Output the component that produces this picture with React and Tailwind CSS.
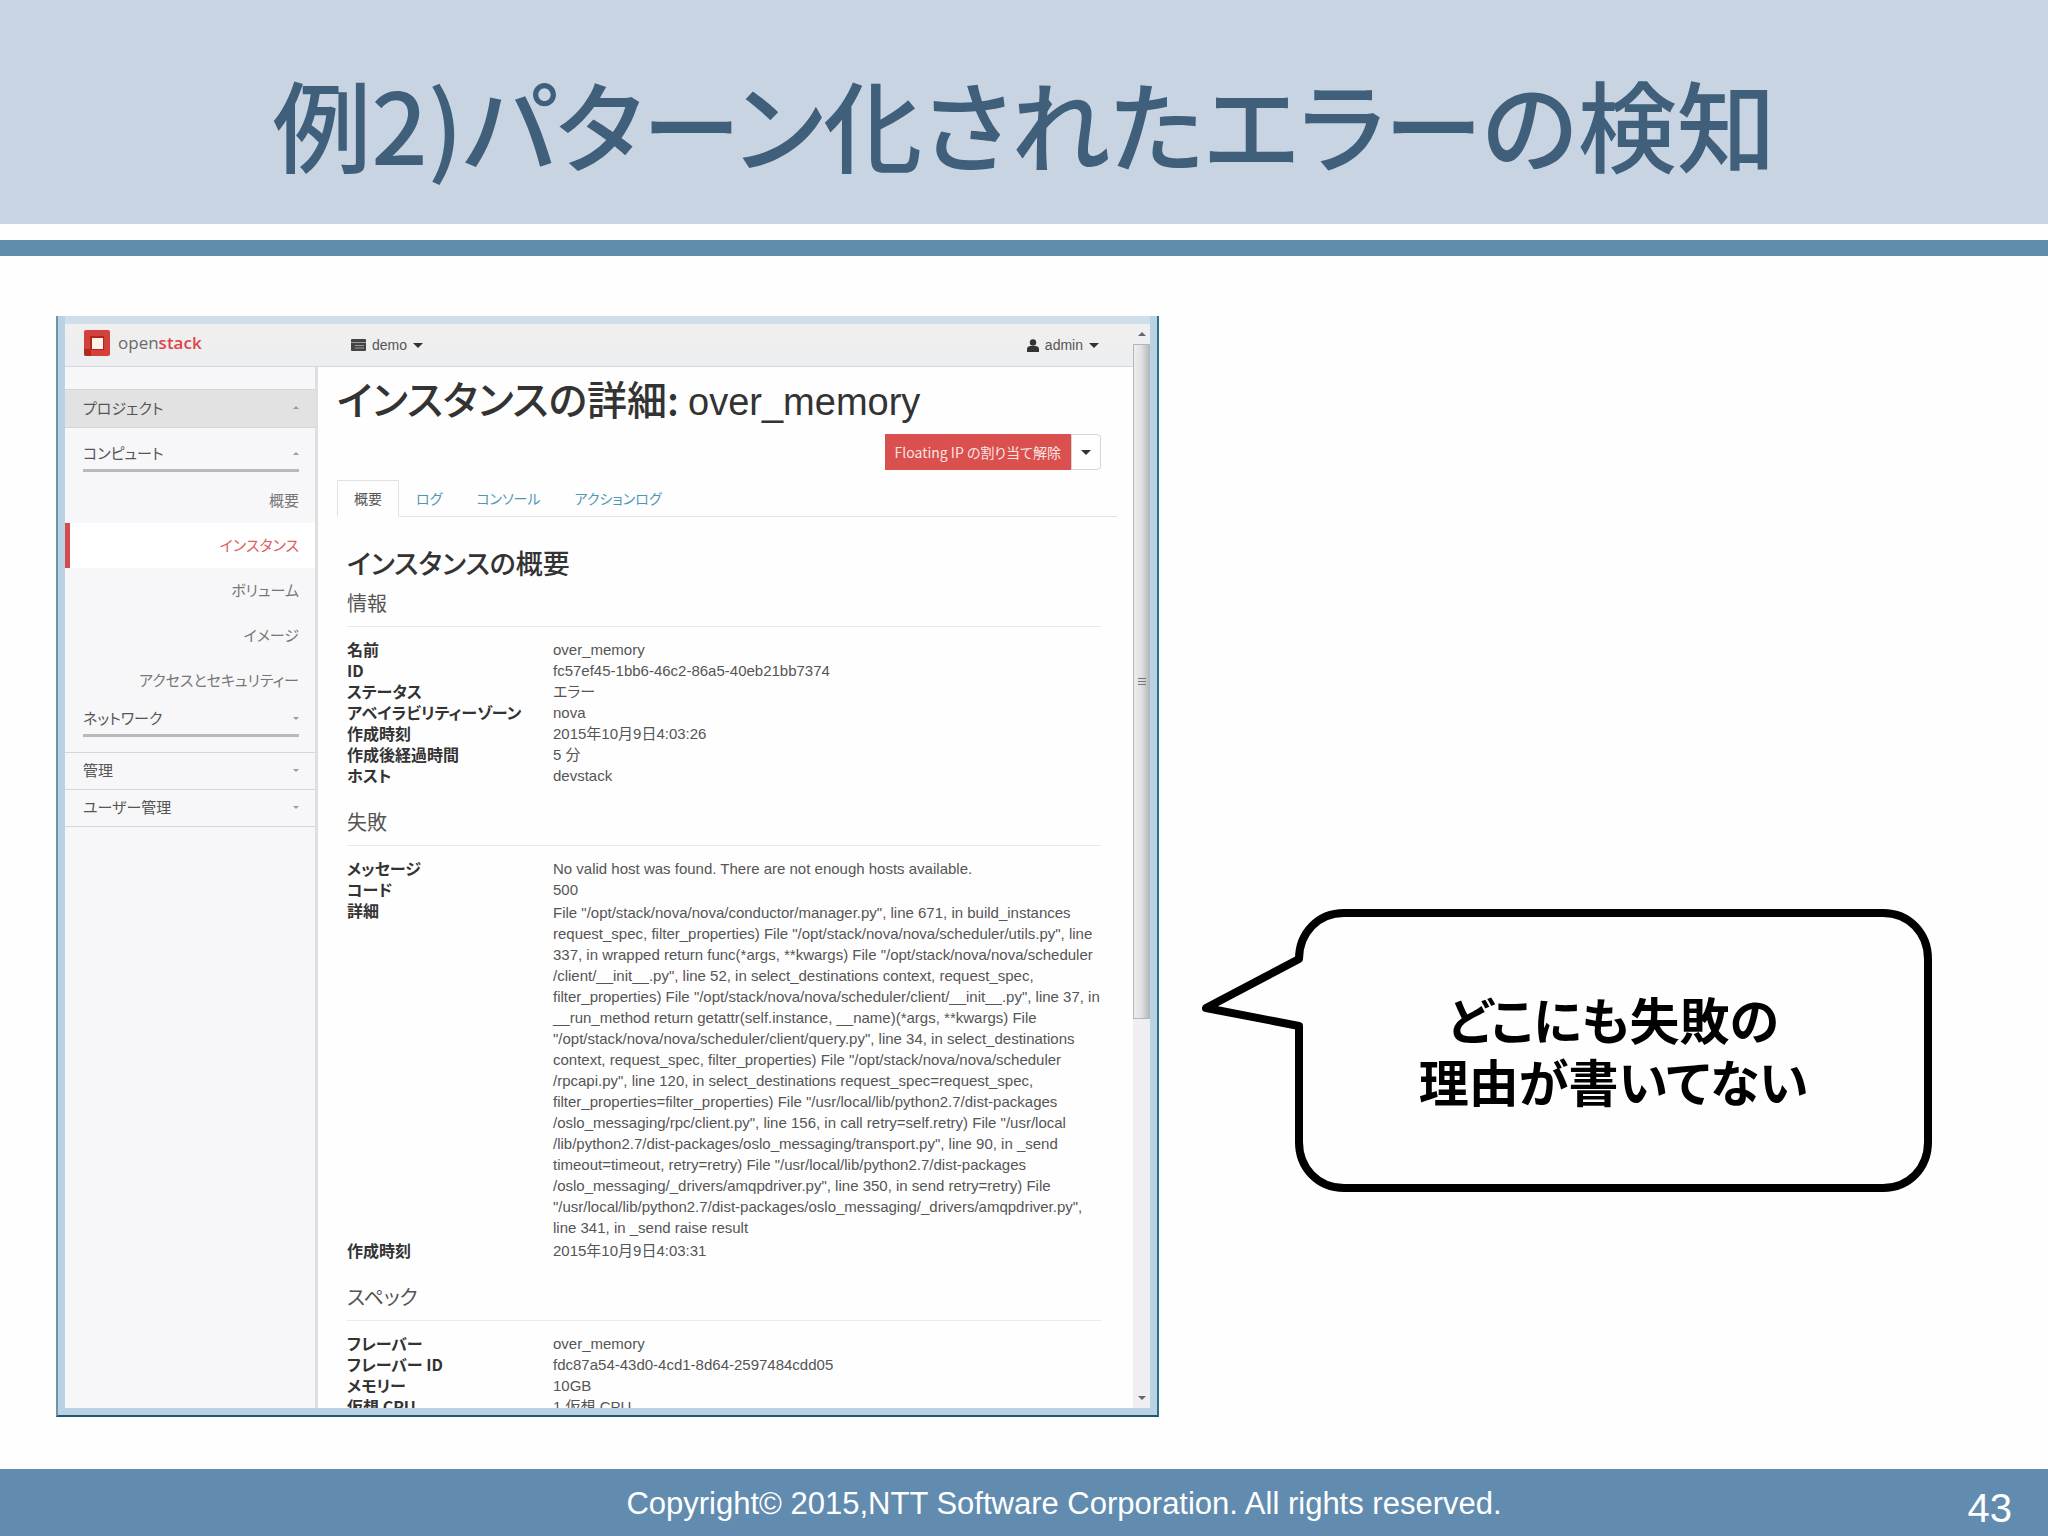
import { useState } from 'react'

const JP = "font-['Noto_Sans_CJK_JP',sans-serif] [font-feature-settings:'palt']"

const NAV_ITEMS = ['概要', 'インスタンス', 'ボリューム', 'イメージ', 'アクセスとセキュリティー']

const TABS = ['概要', 'ログ', 'コンソール', 'アクションログ']

const TRACE = [
  'File "/opt/stack/nova/nova/conductor/manager.py", line 671, in build_instances',
  'request_spec, filter_properties) File "/opt/stack/nova/nova/scheduler/utils.py", line',
  '337, in wrapped return func(*args, **kwargs) File "/opt/stack/nova/nova/scheduler',
  '/client/__init__.py", line 52, in select_destinations context, request_spec,',
  'filter_properties) File "/opt/stack/nova/nova/scheduler/client/__init__.py", line 37, in',
  '__run_method return getattr(self.instance, __name)(*args, **kwargs) File',
  '"/opt/stack/nova/nova/scheduler/client/query.py", line 34, in select_destinations',
  'context, request_spec, filter_properties) File "/opt/stack/nova/nova/scheduler',
  '/rpcapi.py", line 120, in select_destinations request_spec=request_spec,',
  'filter_properties=filter_properties) File "/usr/local/lib/python2.7/dist-packages',
  '/oslo_messaging/rpc/client.py", line 156, in call retry=self.retry) File "/usr/local',
  '/lib/python2.7/dist-packages/oslo_messaging/transport.py", line 90, in _send',
  'timeout=timeout, retry=retry) File "/usr/local/lib/python2.7/dist-packages',
  '/oslo_messaging/_drivers/amqpdriver.py", line 350, in send retry=retry) File',
  '"/usr/local/lib/python2.7/dist-packages/oslo_messaging/_drivers/amqpdriver.py",',
  'line 341, in _send raise result',
].join('\n')

const SECTIONS = [
  {
    title: '情報',
    rows: [
      ['名前', 'over_memory'],
      ['ID', 'fc57ef45-1bb6-46c2-86a5-40eb21bb7374'],
      ['ステータス', 'エラー'],
      ['アベイラビリティーゾーン', 'nova'],
      ['作成時刻', '2015年10月9日4:03:26'],
      ['作成後経過時間', '5 分'],
      ['ホスト', 'devstack'],
    ],
  },
  {
    title: '失敗',
    rows: [
      ['メッセージ', 'No valid host was found. There are not enough hosts available.'],
      ['コード', '500'],
      ['詳細', TRACE],
      ['作成時刻', '2015年10月9日4:03:31'],
    ],
  },
  {
    title: 'スペック',
    rows: [
      ['フレーバー', 'over_memory'],
      ['フレーバー ID', 'fdc87a54-43d0-4cd1-8d64-2597484cdd05'],
      ['メモリー', '10GB'],
      ['仮想 CPU', '1 仮想 CPU'],
    ],
  },
]

function Caret({ up = false, className = 'w-2.5 text-[#333]' }) {
  return (
    <svg className={className} viewBox="0 0 10 5" fill="currentColor" aria-hidden="true">
      <path d={up ? 'M0 5L5 0L10 5Z' : 'M0 0H10L5 5Z'} />
    </svg>
  )
}

function TopBar() {
  return (
    <header className="flex h-[43px] shrink-0 items-center border-b border-[#d5d7d9] bg-linear-to-b from-[#f1efee] to-[#eceef1] pl-[19px] pr-[34px] font-['Liberation_Sans',sans-serif] text-sm text-[#555]">
      <div className="flex w-[267px] items-center gap-2 pb-1">
        <svg className="h-[26px] w-[26px]" viewBox="0 0 26 26" aria-hidden="true">
          <rect width="26" height="26" rx="2" fill="#d2423b" />
          <path d="M0 19L7 19V26H2Q0 26 0 24Z" fill="#b02a22" />
          <rect x="6" y="6" width="14" height="14" fill="#b3251f" />
          <rect x="8" y="8" width="11" height="11" fill="#fdf3e6" />
        </svg>
        <span className="font-['Open_Sans',sans-serif] text-[17px] leading-6 text-[#6a6a6a]">
          open<span className="font-semibold text-[#e0434a]">stack</span>
        </span>
      </div>
      <button className="flex items-center gap-1.5">
        <svg className="h-3 w-[15px]" viewBox="0 0 15 12" aria-hidden="true">
          <rect width="15" height="12" rx="1" fill="#444" />
          <path d="M0 3.5H15M4 6.5H13M4 9H13" stroke="#999" strokeWidth="1" />
        </svg>
        demo
        <Caret />
      </button>
      <button className="ml-auto flex items-center gap-1.5">
        <svg className="h-[13px] w-3" viewBox="0 0 12 13" fill="#333" aria-hidden="true">
          <circle cx="6" cy="3.5" r="3.2" />
          <path d="M0 13V10Q0 7.5 3 7H9Q12 7.5 12 10V13Z" />
        </svg>
        admin
        <Caret />
      </button>
    </header>
  )
}

function Sidebar() {
  const [active, setActive] = useState('インスタンス')
  return (
    <nav className={`w-[253px] shrink-0 border-r-3 border-[#dfdfe2] bg-[#f7f6f8] pt-[22px] text-[15px] leading-5 text-[#555] ${JP}`}>
      <button className="flex h-[39px] w-full items-center justify-between border-y border-[#d6d6d6] bg-[#e2e2e2] pr-4 pb-0.5 pl-[18px]">
        プロジェクト
        <Caret up className="w-1.5 text-[#999]" />
      </button>
      <button className="ml-[18px] flex h-11 w-[216px] items-end justify-between border-b-3 border-[#b9b9ba] pb-1.5">
        コンピュート
        <Caret up className="mb-2 w-1.5 text-[#999]" />
      </button>
      <ul className="pt-1.5">
        {NAV_ITEMS.map((item) => (
          <li key={item}>
            <a
              href="#"
              onClick={() => setActive(item)}
              className={`flex h-[45px] items-center justify-end border-l-5 pr-4 pb-0.5 ${active === item ? 'border-[#d24b50] bg-white text-[#dc5f64]' : 'border-transparent text-[#777]'}`}
            >
              {item}
            </a>
          </li>
        ))}
      </ul>
      <button className="mb-[15px] ml-[18px] flex h-[34px] w-[216px] items-end justify-between border-b-3 border-[#b9b9ba] pb-1.5">
        ネットワーク
        <Caret className="mb-2 w-1.5 text-[#999]" />
      </button>
      {['管理', 'ユーザー管理'].map((label) => (
        <button key={label} className="flex h-[37px] w-full items-center justify-between border-t border-[#d6d6d8] pr-4 pb-0.5 pl-[18px]">
          {label}
          <Caret className="w-1.5 text-[#999]" />
        </button>
      ))}
      <div className="border-t border-[#d6d6d8]" />
    </nav>
  )
}

function Section({ title, rows }) {
  return (
    <section className="mb-[22px]">
      <h4 className="border-b border-[#ebe9ec] pb-[9px] text-xl leading-7 text-[#555]">{title}</h4>
      <dl className="mt-3 grid grid-cols-[206px_1fr] leading-[21px]">
        {rows.map(([label, value]) => (
          <div key={label} className="contents">
            <dt className="text-base leading-[21px] font-bold text-[#333]">{label}</dt>
            <dd className={`font-['Liberation_Sans','Noto_Sans_CJK_JP',sans-serif] text-[15px] whitespace-pre text-[#555] ${value === TRACE ? 'py-0.5' : ''}`}>{value}</dd>
          </div>
        ))}
      </dl>
    </section>
  )
}

function Detail() {
  const [tab, setTab] = useState('概要')
  return (
    <main className={`min-w-0 flex-1 overflow-hidden bg-[#fefefe] pl-[19px] pr-4 ${JP}`}>
      <h2 className="pt-2 text-[40px] leading-[46px] font-medium text-[#333]">
        インスタンスの詳細: <span className="font-['Liberation_Sans',sans-serif] text-[38px] font-normal">over_memory</span>
      </h2>
      <div className="mt-[9px] mr-4 flex h-9 justify-end text-sm">
        <button className="bg-[#d9504e] px-2.5 text-[#fbe3e2]">Floating IP の割り当て解除</button>
        <button aria-label="その他の操作" className="flex w-[30px] items-center justify-center rounded-r-sm border border-[#d5d5d5] bg-white">
          <Caret />
        </button>
      </div>
      <div role="tablist" className="mt-2.5 flex border-b border-[#e2e2e4] text-sm">
        {TABS.map((name) => (
          <button
            key={name}
            role="tab"
            aria-selected={tab === name}
            onClick={() => setTab(name)}
            className={`-mb-px h-[37px] border px-4 pb-0.5 ${tab === name ? 'border-[#e2e2e4] border-b-[#fefefe] text-[#555]' : 'border-transparent text-[#4f97b8]'}`}
          >
            {name}
          </button>
        ))}
      </div>
      <div className="pt-[26px] pr-4 pl-2.5">
        <h3 className="mb-1.5 text-[27px] leading-10 font-medium text-[#333]">インスタンスの概要</h3>
        {SECTIONS.map((s) => (
          <Section key={s.title} title={s.title} rows={s.rows} />
        ))}
      </div>
    </main>
  )
}

function ScrollBar() {
  return (
    <div className="flex w-[17px] shrink-0 flex-col items-center bg-[#efeff2]" aria-hidden="true">
      <div className="flex h-5 items-center">
        <Caret up className="w-2 text-[#666]" />
      </div>
      <div className="flex w-full flex-[674] items-center justify-center border border-[#b4b6b8] bg-linear-to-r from-[#eceded] via-[#dfe1e2] to-[#b5babb]">
        <svg className="h-2 w-2" viewBox="0 0 8 8" stroke="#777">
          <path d="M0 1.5H8M0 4.5H8M0 7.5H8" />
        </svg>
      </div>
      <div className="flex-[370]" />
      <div className="flex h-5 items-center">
        <Caret className="w-2 text-[#666]" />
      </div>
    </div>
  )
}

function BrowserWindow() {
  return (
    <div className="flex min-h-0 min-w-0 flex-col border-x-2 border-b-2 border-l-[#6f93ab] border-r-[#28708f] border-b-[#22566f] bg-[#b9d3e4] px-[7px] pb-[7px]">
      <div className="h-2 shrink-0 bg-[#d0deea]" />
      <div className="flex min-h-0 flex-1 bg-white">
        <div className="flex min-w-0 flex-1 flex-col">
          <TopBar />
          <div className="flex min-h-0 flex-1">
            <Sidebar />
            <Detail />
          </div>
        </div>
        <ScrollBar />
      </div>
    </div>
  )
}

function Callout() {
  return (
    <div className="relative mt-[593px] self-start">
      <svg className="block w-full" viewBox="0 0 731 283" aria-hidden="true">
        <path
          d="M98 50C98 24 117 4 143 4H682C708 4 727 24 727 50V233C727 259 708 279 682 279H143C117 279 98 259 98 233V117L5 99L98 50Z"
          fill="#fefefe"
          stroke="#000"
          strokeWidth="8"
          strokeLinejoin="round"
        />
      </svg>
      <div className="absolute inset-0 flex items-center justify-center pb-1 pl-[94px]">
        <p className={`text-center text-[50px] leading-[62px] font-bold whitespace-pre-line text-black ${JP}`}>
          {'どこにも失敗の\n理由が書いてない'}
        </p>
      </div>
    </div>
  )
}

export default function App() {
  return (
    <div className="flex h-screen flex-col bg-[#fefefe]">
      <header className="flex h-56 shrink-0 items-center justify-center bg-[#c8d4e1] pt-5">
        <h1 className={`text-[99px] leading-[120px] font-medium text-[#3f5f7a] ${JP}`}>例2)パターン化されたエラーの検知</h1>
      </header>
      <div className="mt-4 h-4 shrink-0 bg-[#608cae]" />
      <div className="grid min-h-0 flex-1 grid-cols-[1103fr_731fr] grid-rows-[minmax(0,1fr)] gap-x-[42px] pt-[60px] pr-[116px] pb-[52px] pl-14">
        <BrowserWindow />
        <Callout />
      </div>
      <footer className="grid h-[67px] shrink-0 grid-cols-[1fr_auto_1fr] items-center bg-[#618cb0] pl-20 font-['Liberation_Sans',sans-serif] text-white">
        <p className="col-start-2 pt-1 text-[31px]">Copyright© 2015,NTT Software Corporation. All rights reserved.</p>
        <p className="pt-2.5 pr-9 text-right text-[40px] leading-10">43</p>
      </footer>
    </div>
  )
}
